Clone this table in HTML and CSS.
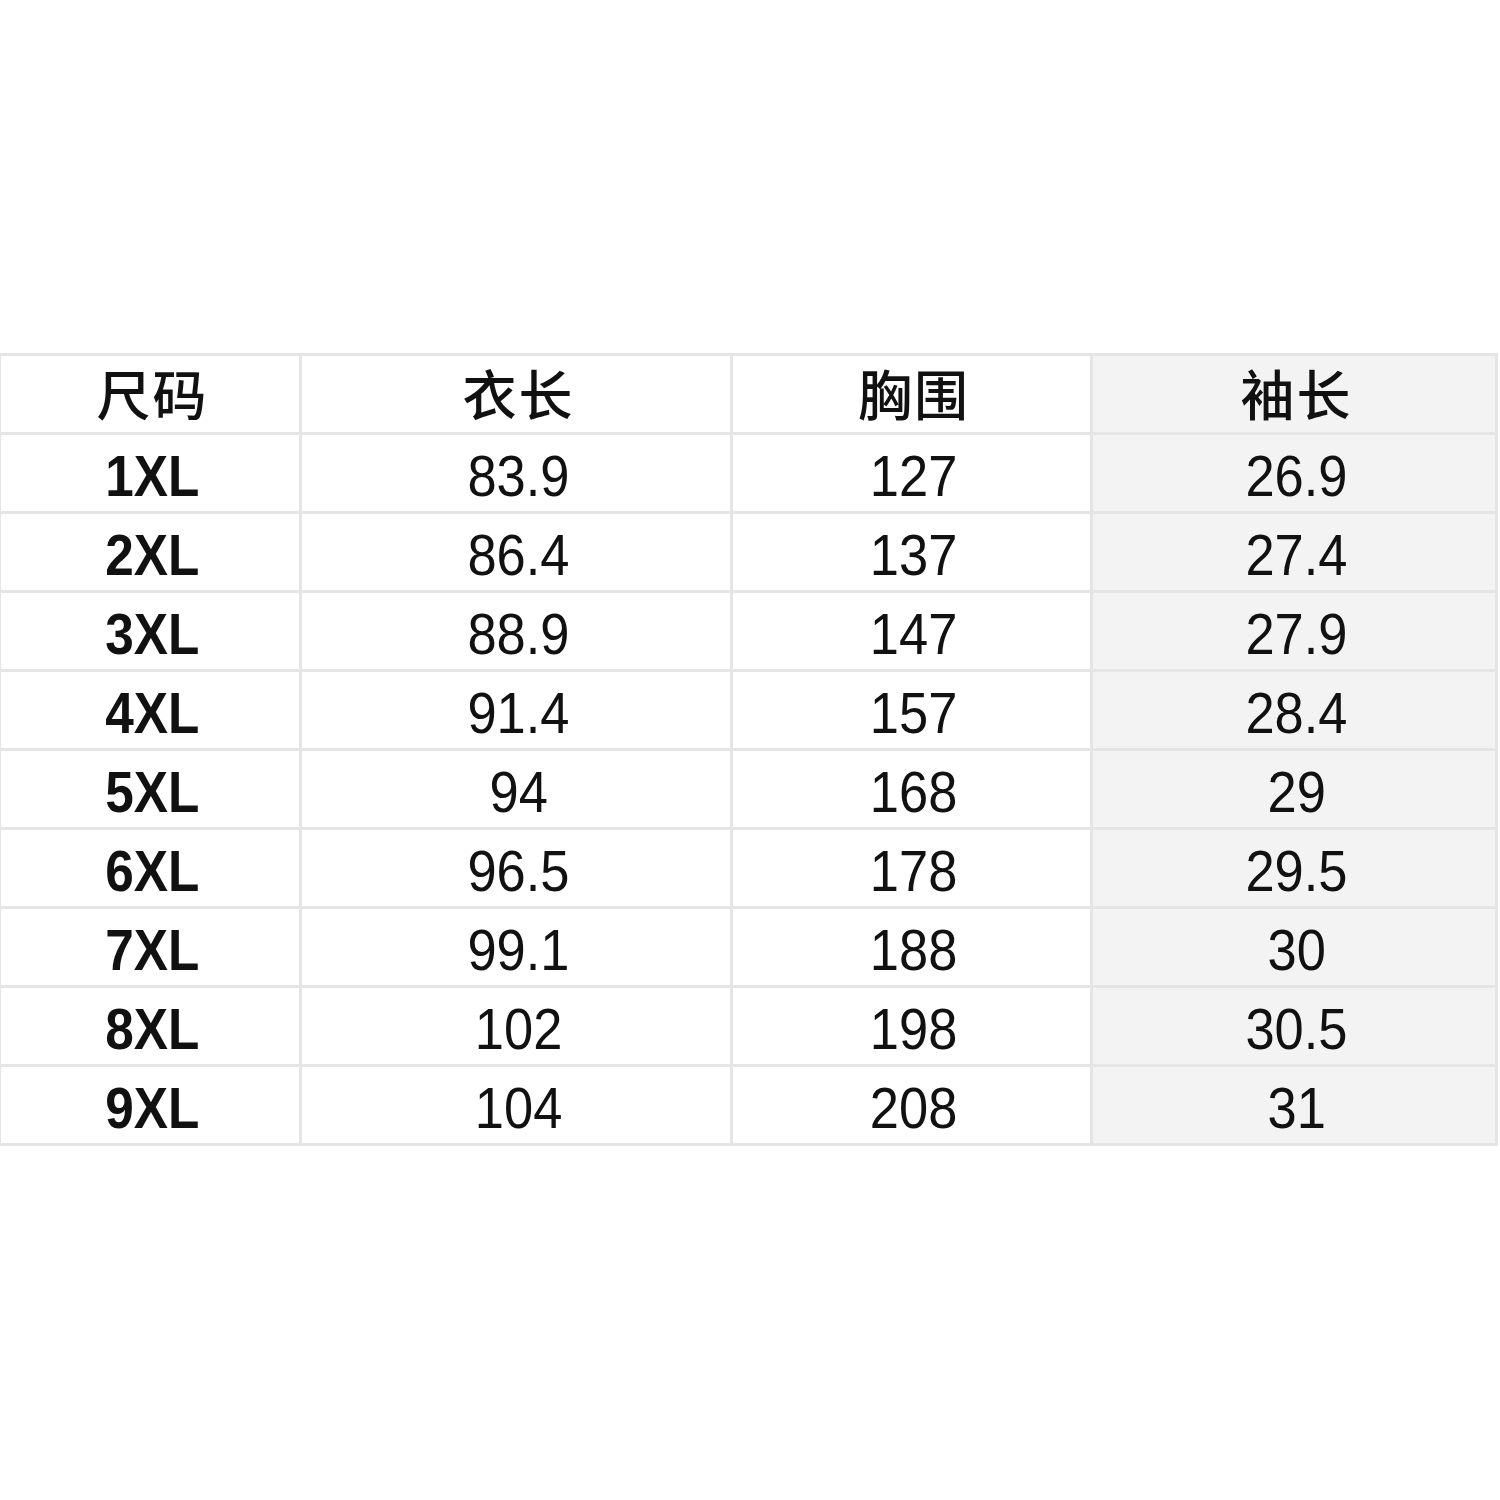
FILE: index.html
```html
<!DOCTYPE html>
<html lang="zh">
<head>
<meta charset="utf-8">
<title>尺码表</title>
<link rel="stylesheet" href="styles.css">
</head>
<body>
<div class="sheet">
  <div class="cell head">尺码</div><div class="cell head">衣长</div><div class="cell head">胸围</div><div class="cell head alt">袖长</div>
  <div class="cell size"><span>1XL</span></div><div class="cell"><span>83.9</span></div><div class="cell"><span>127</span></div><div class="cell alt"><span>26.9</span></div>
  <div class="cell size"><span>2XL</span></div><div class="cell"><span>86.4</span></div><div class="cell"><span>137</span></div><div class="cell alt"><span>27.4</span></div>
  <div class="cell size"><span>3XL</span></div><div class="cell"><span>88.9</span></div><div class="cell"><span>147</span></div><div class="cell alt"><span>27.9</span></div>
  <div class="cell size"><span>4XL</span></div><div class="cell"><span>91.4</span></div><div class="cell"><span>157</span></div><div class="cell alt"><span>28.4</span></div>
  <div class="cell size"><span>5XL</span></div><div class="cell"><span>94</span></div><div class="cell"><span>168</span></div><div class="cell alt"><span>29</span></div>
  <div class="cell size"><span>6XL</span></div><div class="cell"><span>96.5</span></div><div class="cell"><span>178</span></div><div class="cell alt"><span>29.5</span></div>
  <div class="cell size"><span>7XL</span></div><div class="cell"><span>99.1</span></div><div class="cell"><span>188</span></div><div class="cell alt"><span>30</span></div>
  <div class="cell size"><span>8XL</span></div><div class="cell"><span>102</span></div><div class="cell"><span>198</span></div><div class="cell alt"><span>30.5</span></div>
  <div class="cell size"><span>9XL</span></div><div class="cell"><span>104</span></div><div class="cell"><span>208</span></div><div class="cell alt"><span>31</span></div>
</div>
</body>
</html>
```

FILE: styles.css
```css
html, body {
  margin: 0;
  padding: 0;
  background: #ffffff;
}

.sheet {
  margin-top: 353px;
  width: 1498px;
  box-sizing: border-box;
  display: grid;
  grid-template-columns: 298px 428px 357px 402px;
  grid-auto-rows: 76px;
  gap: 3px;
  padding: 3px 3px 3px 1px;
  background: #e5e5e8;
}

.cell {
  background: #ffffff;
  display: flex;
  align-items: center;
  justify-content: center;
  padding-top: 6px;
  padding-left: 5px;
  box-sizing: border-box;
  font-family: "Liberation Sans", Arial, sans-serif;
  font-size: 57px;
  color: #111111;
  line-height: 1;
}

.cell span {
  display: inline-block;
  transform: scaleX(0.92);
}

.cell.alt {
  background: #f3f3f4;
}

.cell.head {
  font-family: "Noto Sans CJK SC", "Noto Sans CJK JP", sans-serif;
  font-size: 54px;
  font-weight: 500;
  letter-spacing: 2px;
  padding-top: 0;
  padding-bottom: 2px;
}

.cell.size {
  font-weight: bold;
}

.cell.size span {
  transform: scaleX(0.9);
}
```
